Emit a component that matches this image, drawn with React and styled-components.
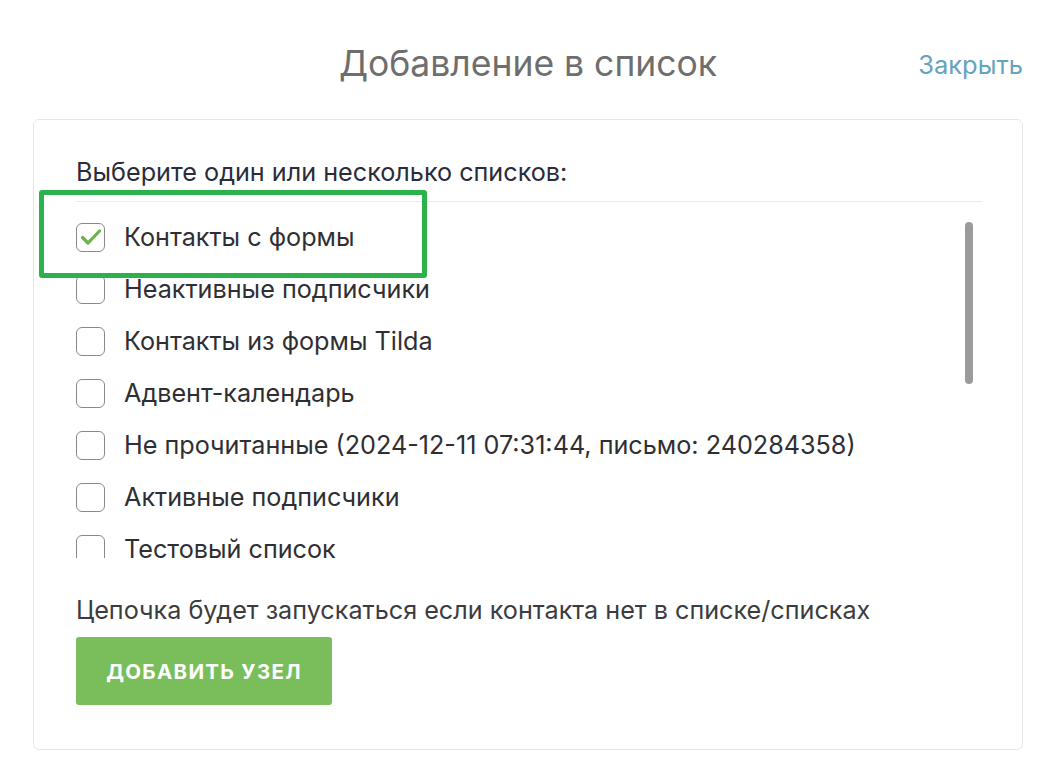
import React from "react";
import styled, { createGlobalStyle } from "styled-components";

const Global = createGlobalStyle`
  html, body { margin: 0; padding: 0; background: #ffffff; }
  body { font-family: Inter, "Noto Sans", "Liberation Sans", sans-serif; -webkit-font-smoothing: antialiased; }
  * { box-sizing: border-box; }
`;

const Page = styled.div`
  width: 1058px;
  min-height: 784px;
  background: #fff;
`;

const Header = styled.header`
  display: grid;
  grid-template-columns: 1fr auto 1fr;
  align-items: center;
  height: 119px;
  padding: 8px 35px 0 33px;
`;

const Title = styled.h1`
  grid-column: 2;
  margin: 0;
  font-size: 35.5px;
  font-weight: 400;
  color: #6e6e6e;
`;

const CloseLink = styled.a`
  grid-column: 3;
  justify-self: end;
  font-size: 25.5px;
  color: #65a3c0;
  text-decoration: none;
  cursor: pointer;
  margin-top: 2px;
`;

const Card = styled.section`
  position: relative;
  margin: 0 35px 0 33px;
  border: 1px solid #e7e7e7;
  border-radius: 6px;
  padding: 37px 40px 44px 42px;
`;

const Heading = styled.div`
  font-size: 25.2px;
  line-height: 31px;
  color: #2a2c3a;
`;

const Divider = styled.hr`
  margin: 13px 0 0 0;
  border: 0;
  border-top: 1px solid #ebebeb;
`;

const ListWrap = styled.div`
  position: relative;
  height: 356px;
  overflow: hidden;
`;

const List = styled.ul`
  list-style: none;
  margin: 0;
  padding: 9px 0 0 0;
`;

const Row = styled.li`
  display: flex;
  align-items: center;
  height: 52px;
  gap: 19px;
  font-size: 25.2px;
  color: #2f2f33;
`;

const Box = styled.span`
  flex: none;
  width: 29px;
  height: 29px;
  border: 1.5px solid #8a8a8a;
  border-radius: 6px;
  display: flex;
  align-items: center;
  justify-content: center;
  background: #fff;
`;

const Thumb = styled.div`
  position: absolute;
  right: 9px;
  top: 20px;
  width: 8px;
  height: 162px;
  border-radius: 4px;
  background: #9b9b9b;
`;

const Note = styled.p`
  margin: 37px 0 0 0;
  font-size: 25.2px;
  line-height: 30px;
  color: #3c3c40;
`;

const Button = styled.button`
  display: block;
  margin-top: 12px;
  width: 256px;
  height: 68px;
  border: 0;
  border-radius: 3px;
  background: #79be5b;
  color: #fff;
  font-family: inherit;
  font-size: 20.5px;
  font-weight: 700;
  letter-spacing: 1.3px;
  text-transform: uppercase;
  cursor: pointer;
`;

const Highlight = styled.div`
  position: absolute;
  left: 5px;
  top: 70px;
  width: 388px;
  height: 88px;
  border: 5px solid #2bb24a;
  border-radius: 3px;
  pointer-events: none;
`;

const items = [
  { label: "Контакты с формы", checked: true },
  { label: "Неактивные подписчики" },
  { label: "Контакты из формы Tilda" },
  { label: "Адвент-календарь" },
  { label: "Не прочитанные (2024-12-11 07:31:44, письмо: 240284358)" },
  { label: "Активные подписчики" },
  { label: "Тестовый список" },
];

const Check = () => (
  <svg width="22" height="18" viewBox="0 0 22 18" fill="none">
    <path d="M2.5 9.5 L8 15 L19.5 3" stroke="#6ab24a" strokeWidth="3.2" strokeLinecap="round" strokeLinejoin="round" />
  </svg>
);

export default function App() {
  return (
    <Page>
      <Global />
      <Header>
        <Title>Добавление в список</Title>
        <CloseLink>Закрыть</CloseLink>
      </Header>
      <Card>
        <Heading>Выберите один или несколько списков:</Heading>
        <Divider />
        <ListWrap>
          <List>
            {items.map((it) => (
              <Row key={it.label}>
                <Box>{it.checked && <Check />}</Box>
                {it.label}
              </Row>
            ))}
          </List>
          <Thumb />
        </ListWrap>
        <Note>Цепочка будет запускаться если контакта нет в списке/списках</Note>
        <Button>Добавить узел</Button>
        <Highlight />
      </Card>
    </Page>
  );
}
